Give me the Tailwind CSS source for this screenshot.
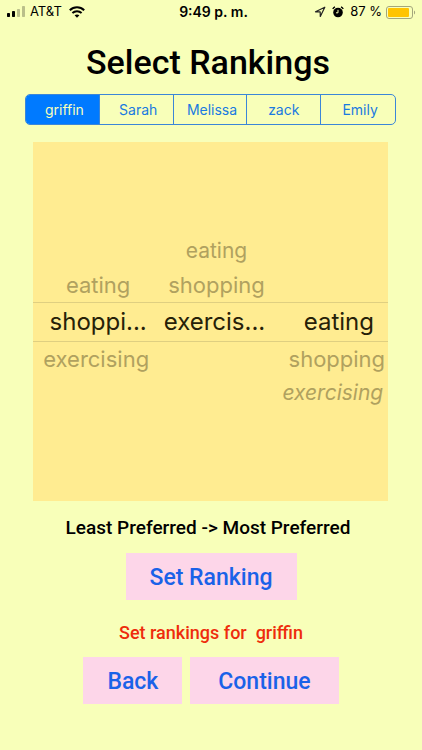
<!DOCTYPE html>
<html lang="en">
<head>
    <meta charset="UTF-8">
    <meta name="viewport" content="width=device-width, initial-scale=1.0">
    <title>Select Rankings</title>
    <script src="https://cdn.jsdelivr.net/npm/@tailwindcss/browser@4"></script>
</head>
<body class="min-h-screen bg-[#f8ffb9] font-['Roboto',sans-serif] text-black">
    <!-- Status bar -->
    <header class="grid h-6 grid-cols-[1fr_auto_1fr] items-center pr-[6px] pl-[7px] font-['Inter',sans-serif] text-[13px]">
        <div class="flex items-center">
            <svg class="mr-[3px] h-3 w-5" viewBox="0 0 20 12" aria-hidden="true">
                <rect x="0" y="7" width="3" height="4" rx="0.7"/>
                <rect x="5" y="5" width="3" height="6" rx="0.7"/>
                <rect x="10" y="3" width="3" height="8" rx="0.7" opacity=".25"/>
                <rect x="15" y="0" width="3" height="11" rx="0.7" opacity=".25"/>
            </svg>
            <span>AT&amp;T</span>
            <svg class="ml-[7px] h-3 w-4" viewBox="0 0 16 12" fill="none" stroke="#000" stroke-width="2" aria-hidden="true">
                <path d="M.8 4.3C4.9.3 11.1.3 15.2 4.3"/>
                <path d="M3.4 7c2.6-2.5 6.600-2.500 9.200 0"/>
                <path d="M8 11.700 5.600 9.300c1.300-1.200 3.500-1.200 4.800 0z" fill="#000" stroke="none"/>
            </svg>
        </div>
        <time class="pl-1 text-sm font-semibold">9:49 p. m.</time>
        <div class="flex items-center justify-end">
            <svg class="mr-[6px] size-3" viewBox="0 0 12 12" fill="none" stroke="#222" stroke-width="1.200" stroke-linejoin="round" aria-hidden="true">
                <path d="M10.800 1.200 1.500 5.800l4.700.100.100 4.600z"/>
            </svg>
            <svg class="mr-[6px] size-3" viewBox="0 0 12 12" fill="none" stroke="#000" aria-hidden="true">
                <circle cx="6" cy="6.500" r="4.800" fill="#000" stroke="none"/>
                <path d="M.8 3A4 4 0 0 1 3 .8M9 .8A4 4 0 0 1 11.200 3" stroke-width="1.300"/>
                <path d="M6 3.800v3H4" stroke="#f8ffb9"/>
            </svg>
            <span>87 %</span>
            <svg class="ml-1 h-[13px] w-[30px]" viewBox="0 0 30 13" aria-hidden="true">
                <rect x=".5" y=".5" width="26" height="12" rx="2.500" fill="none" stroke="#a3a67c"/>
                <rect x="2" y="2" width="21" height="9" rx="1" fill="#ffc400"/>
                <path d="M28 4.500v4c1.500-.5 1.500-3.500 0-4z" fill="#a3a67c"/>
            </svg>
        </div>
    </header>

    <main class="flex flex-col items-center">
        <h1 class="mt-4 pr-1.5 text-[34px] leading-11 font-medium">Select Rankings</h1>

        <div class="mt-[10px] flex h-[31px] w-full pr-[26px] pl-[25px] font-['Inter',sans-serif] text-sm text-[#1a7ae0]">
            <div id="people" class="grid w-full grid-cols-5 divide-x divide-[#3b86d8] overflow-hidden rounded-[5px] border border-[#3b86d8]">
                <button type="button" aria-pressed="true" class="pl-1 aria-pressed:bg-[#007aff] aria-pressed:text-[#f8ffb9]">griffin</button>
                <button type="button" aria-pressed="false" class="pl-1 aria-pressed:bg-[#007aff] aria-pressed:text-[#f8ffb9]">Sarah</button>
                <button type="button" aria-pressed="false" class="pl-1 aria-pressed:bg-[#007aff] aria-pressed:text-[#f8ffb9]">Melissa</button>
                <button type="button" aria-pressed="false" class="aria-pressed:bg-[#007aff] aria-pressed:text-[#f8ffb9]">zack</button>
                <button type="button" aria-pressed="false" class="pl-1 aria-pressed:bg-[#007aff] aria-pressed:text-[#f8ffb9]">Emily</button>
            </div>
        </div>

        <!-- Picker wheels, the middle row holds the selection -->
        <div class="mt-[17px] w-full pr-[34px] pl-[33px]">
            <div class="grid h-[359px] grid-cols-3 grid-rows-[34px_34px_40px_34px_34px] content-center bg-[#ffec91] text-center font-['Inter',sans-serif] text-[22px] leading-[34px] text-[#b0a15f]">
                <div class="col-start-2 pl-3 text-[21px]">eating</div>
                <div class="col-start-1 row-start-2 pl-3">eating</div>
                <div class="col-start-2 row-start-2 pl-3">shopping</div>
                <div class="col-span-3 row-start-3 grid grid-cols-3 border-y border-[#dfcf81] text-2xl leading-[38px] text-[#262108]">
                    <div class="pl-3">shoppi...</div>
                    <div class="pl-2">exercis...</div>
                    <div class="pl-5">eating</div>
                </div>
                <div class="row-start-4 pl-2">exercising</div>
                <div class="col-start-3 row-start-4 pl-4">shopping</div>
                <div class="col-start-3 row-start-5 pl-2 text-[21px] italic">exercising</div>
            </div>
        </div>

        <p class="mt-[15px] pr-1.5 text-[19px] leading-6 font-medium">Least Preferred -&gt; Most Preferred</p>
        <button type="button" class="mt-[13px] h-[47px] bg-[#fdd6e9] px-6 pt-[3px] text-[23px] font-medium text-[#1a62e8]">Set Ranking</button>
        <p id="message" class="mt-[21px] text-lg leading-6 font-medium whitespace-pre text-[#ee2c0c]">Set rankings for  griffin</p>
        <div class="mt-3 flex gap-2 text-[23px] font-medium text-[#1a62e8]">
            <button type="button" class="h-[47px] bg-[#fdd6e9] px-6 pt-[3px]">Back</button>
            <button type="button" class="h-[47px] bg-[#fdd6e9] px-7 pt-[3px]">Continue</button>
        </div>
    </main>

    <script>
        const people = document.querySelectorAll('#people button');
        people.forEach((button) => {
            button.addEventListener('click', () => {
                people.forEach((b) => b.setAttribute('aria-pressed', b === button));
                document.getElementById('message').textContent = 'Set rankings for  ' + button.textContent;
            });
        });
    </script>
</body>
</html>
